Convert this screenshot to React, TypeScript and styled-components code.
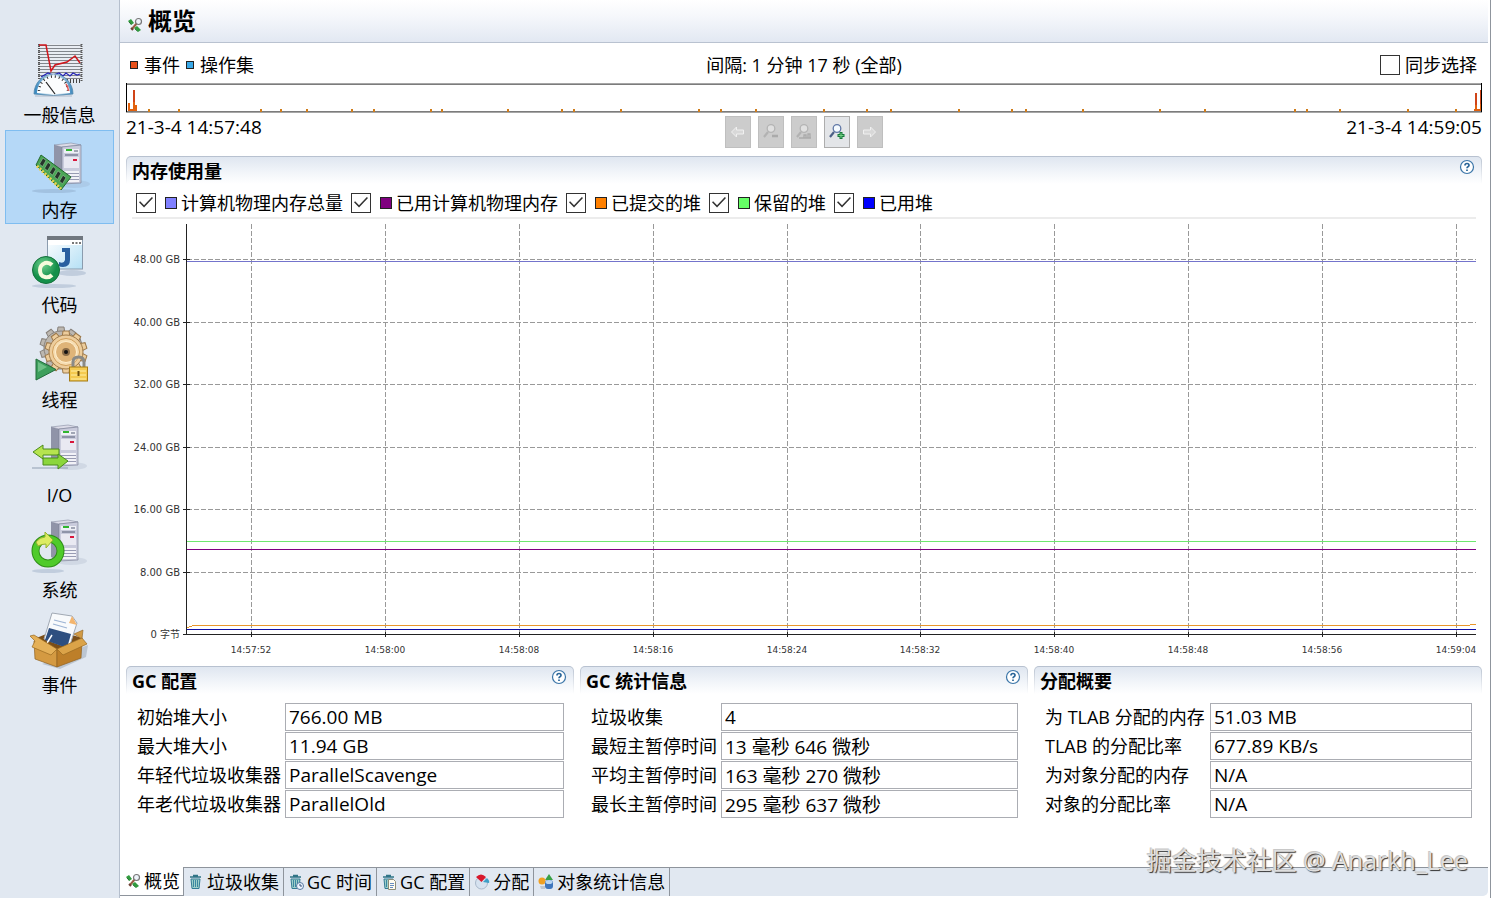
import React, { useState } from 'react';
import styled, { createGlobalStyle } from 'styled-components';

const GlobalStyle = createGlobalStyle`
    * {
        box-sizing: border-box;
    }

    body {
        margin: 0;
        background: #fff;
        color: #000;
        font-family: 'Open Sans', 'Noto Sans CJK SC', sans-serif;
        font-size: 18px;
        line-height: 26px;
    }

    button,
    input {
        font: inherit;
        color: inherit;
        padding: 0;
        margin: 0;
    }

    svg {
        display: block;
        flex: none;
    }
`;

// page frame
const Page = styled.div`
    display: flex;
    min-height: 100vh;
    position: relative;
    border-right: 1px solid #8f959d;
`;

const Sidebar = styled.nav`
    width: 120px;
    flex: none;
    padding: 35px 5px 0;
    background: #e1e8f1;
    border-right: 1px solid #b5bfcd;
    display: flex;
    flex-direction: column;
    gap: 1px;
`;

const NavItem = styled.button<{ $active: boolean }>`
    height: 94px;
    border: 1px solid ${(p) => (p.$active ? '#7fbdf0' : 'transparent')};
    background: ${(p) => (p.$active ? '#b5d8f7' : 'transparent')};
    display: flex;
    flex-direction: column;
    align-items: center;
    gap: 2px;
    cursor: pointer;
`;

const Main = styled.main`
    flex: 1;
    min-width: 0;
    display: flex;
    flex-direction: column;
    padding: 0 2px 2px 0;
`;

const PageHeader = styled.header`
    height: 43px;
    padding: 0 7px;
    display: flex;
    align-items: center;
    gap: 5px;
    background: linear-gradient(#fff, #f5f7fb 40%, #e2e8f2);
    border-bottom: 1px solid #b9c2d0;

    svg {
        margin-top: 8px;
    }
`;

const PageTitle = styled.h1`
    margin: 0;
    font-size: 24px;
    font-weight: 700;
    line-height: 40px;
`;

const Content = styled.div`
    padding: 0 6px;
`;

const ThreeColumns = styled.div`
    display: grid;
    grid-template-columns: 1fr auto 1fr;
    padding-top: 3px;
    align-items: center;
    height: 40px;
`;

const TimelineFooter = styled(ThreeColumns)`
    align-items: start;
    height: 43px;
`;

const Legend = styled.div`
    display: flex;
    align-items: center;
    gap: 6px;
    padding-left: 4px;
`;

const Dot = styled.span<{ $color: string }>`
    width: 8px;
    height: 8px;
    border: 1px solid #222;
    background: ${(p) => p.$color};
`;

const RightLabel = styled.label`
    display: flex;
    justify-content: flex-end;
    align-items: center;
    gap: 5px;
    padding-right: 5px;
`;

const CheckBox = styled.input`
    appearance: none;
    width: 20px;
    height: 20px;
    flex: none;
    border: 1px solid #333;
    background: #fff;
    display: grid;
    place-content: center;

    &:checked::before {
        content: '';
        width: 14px;
        height: 12px;
        background: #333;
        clip-path: polygon(0 48%, 8% 40%, 36% 72%, 92% 4%, 100% 12%, 36% 92%);
    }
`;

const TimeText = styled.span<{ $right?: boolean }>`
    font-size: 19px;
    line-height: 22px;
    text-align: ${(p) => (p.$right ? 'right' : 'left')};
`;

const ToolBar = styled.div`
    display: flex;
    gap: 7px;
`;

const ToolButton = styled.button`
    width: 26px;
    height: 32px;
    border: 1px solid #adadad;
    background: #e3e5e8;
    display: flex;
    align-items: center;
    justify-content: center;

    &:disabled {
        background: #cccccc;
        border-color: #bfbfbf;
    }
`;

const SectionHeader = styled.div`
    height: 28px;
    padding: 0 6px 0 5px;
    display: flex;
    align-items: flex-start;
    justify-content: space-between;
    border: 1px solid transparent;
    border-bottom: 0;
    border-radius: 5px 5px 0 0;
    background:
        linear-gradient(#dfe6f0, #f3f6fa 60%, #fff) padding-box,
        linear-gradient(#b6c0cf, #fff) border-box;
`;

const SectionTitle = styled.h2`
    margin: 0;
    font-size: 18px;
    font-weight: 700;
    line-height: 28px;
`;

const HelpButton = styled.button`
    border: 0;
    background: none;
    margin-top: 2px;
`;

const SeriesRow = styled.div`
    display: flex;
    align-items: center;
    gap: 8px;
    height: 35px;
    margin: 0 6px;
    padding: 4px 4px 0;
    border-bottom: 2px solid #ececec;
`;

const SeriesLabel = styled.label`
    display: flex;
    align-items: center;
`;

const Swatch = styled.span<{ $color: string }>`
    width: 12px;
    height: 12px;
    margin: 0 4px 0 9px;
    border: 1px solid #222;
    background: ${(p) => p.$color};
`;

const ChartBox = styled.div`
    padding: 0 6px;
    margin-bottom: 6px;
`;

const Panels = styled.div`
    display: grid;
    grid-template-columns: repeat(3, minmax(0, 1fr));
    gap: 6px;
`;

const Fields = styled.div<{ $labelWidth: number }>`
    display: grid;
    grid-template-columns: ${(p) => p.$labelWidth}px 1fr;
    column-gap: 4px;
    row-gap: 1px;
    padding: 9px 10px 0 11px;
    align-items: center;
    white-space: nowrap;
`;

const ValueBox = styled.input`
    width: 100%;
    height: 28px;
    border: 1px solid #abadb3;
    background: #fff;
    padding: 0 3px;
    outline: 0;
    font-size: 19px;
`;

const TabBar = styled.div`
    display: flex;
    height: 29px;
    margin-top: auto;
    background: #e1e8f1;
    border-bottom-right-radius: 5px;
`;

const Tab = styled.button<{ $active: boolean }>`
    display: flex;
    align-items: center;
    gap: 3px;
    padding: ${(p) => (p.$active ? '0 3px 0 5px' : '0 4px')};
    border: 0 solid #8e949c;
    border-width: ${(p) => (p.$active ? '0 1px 1px 0' : '1px 1px 0 0')};
    background: ${(p) => (p.$active ? '#fff' : 'transparent')};
    white-space: nowrap;
`;

const TabFill = styled.div`
    flex: 1;
    border-top: 1px solid #8e949c;
`;

const Watermark = styled.div`
    position: absolute;
    right: 22px;
    bottom: 20px;
    font-size: 25px;
    line-height: 36px;
    color: #dedede;
    text-shadow: 1px 1px 1px #333, -1px -1px 0 #c8c8c8;
    pointer-events: none;
`;

// large sidebar icons
const Server = ({ x, y }: { x: number; y: number }) => (
    <g transform={`translate(${x} ${y})`}>
        <ellipse cx="20" cy="41" rx="16" ry="4" fill="#8a9bb5" opacity=".2" />
        <path d="M0 2 8 4v37l-8-4z" fill="#9094a8" />
        <path d="M0 2 17 0l10 2-19 2z" fill="#dcdce8" stroke="#777c92" strokeWidth=".5" />
        <path d="M8 4 27 2v38l-19 1z" fill="#c9cbdc" stroke="#777c92" strokeWidth=".6" />
        <path d="M10 6h15v4H10z" fill="#eef0f6" />
        <path d="M12 7h6" stroke="#2fb52f" strokeWidth="2" />
        <path d="M20 8h4M11 12h13" stroke="#555c75" />
        <path d="M10 14h15v11H10z" fill="#e9e9f2" />
        <path d="M19 17h4" stroke="#d8173c" strokeWidth="2" />
        <path d="M10 29h15M10 32h15M10 35h15M10 38h15" stroke="#fff" strokeWidth="1.4" />
        <path d="M10 30.500h15M10 33.500h15M10 36.500h15" stroke="#8286a0" strokeWidth=".7" />
    </g>
);

const gearTeeth = Array.from({ length: 10 }, (_, i) => i * 36);

const Gear = ({ x, y, fill, stroke }: { x: number; y: number; fill: string; stroke: string }) => (
    <g transform={`translate(${x} ${y})`} fill={fill} stroke={stroke} strokeWidth="1">
        {gearTeeth.map((a) => (
            <path key={a} d="m-4-14 1-7h6l1 7z" transform={`rotate(${a})`} />
        ))}
        <circle r="17" />
        <circle r="16" stroke="none" />
    </g>
);

const GeneralIcon = () => (
    <svg width="60" height="64" viewBox="0 0 60 64">
        <defs>
            <pattern id="stripes" width="3" height="3" patternUnits="userSpaceOnUse">
                <rect width="3" height="3" fill="#e9edf3" />
                <rect width="3" height="1" fill="#82868c" />
            </pattern>
            <linearGradient id="dial" x1="0" x2="1">
                <stop offset="0" stopColor="#2c82bd" />
                <stop offset=".5" stopColor="#eaf4fb" />
                <stop offset="1" stopColor="#3b87bd" />
            </linearGradient>
        </defs>
        <rect x="8" y="8" width="44" height="36" fill="url(#stripes)" />
        <path d="M9 8v36M51.500 8v38" stroke="#555" strokeWidth="2" strokeDasharray="1 1" />
        <path d="M37 45h14" stroke="#444" strokeWidth="4" strokeDasharray="1 2" />
        <path d="M9 9h7l5 26 4-6 12-3 8-6 5 7" fill="none" stroke="#d0161c" strokeWidth="1.500" />
        <path d="m11 41 7-4 5 2 6-2 4 3 3-3 4 3 3-3 4 2 3-1" fill="none" stroke="#2323b8" strokeWidth="1.200" />
        <path d="M4 58a19.500 20 0 0 1 39 0q-19.500 3-39 0z" fill="url(#dial)" stroke="#5689ac" strokeWidth=".8" />
        <path d="M7 57a16.500 17 0 0 1 33 0q-16 2-33 0z" fill="#fbfdfe" />
        <path d="M9 55a14.500 14.500 0 0 1 29 0" fill="none" stroke="#333" strokeWidth="2.500" strokeDasharray="1 3" />
        <path d="M36 48q2 3 2.500 7" fill="none" stroke="#d55" strokeWidth="1.500" />
        <path d="m16 46 9 12" stroke="#222" strokeWidth="1.200" />
        <path d="M5 60h37" stroke="#8290a4" opacity=".5" />
    </svg>
);

const MemoryIcon = () => (
    <svg width="60" height="64" viewBox="0 0 60 64">
        <ellipse cx="24" cy="60" rx="22" ry="2" fill="#7890b0" opacity=".3" />
        <Server x={24} y={12} />
        <path d="M11 24 41 46 31 59 6 34z" fill="#4aa656" stroke="#24692e" />
        <path d="m7 35 24 23" stroke="#e8d24e" strokeWidth="3" strokeDasharray="2 1.500" />
        <g fill="#26352b" stroke="#a4d5a6" strokeWidth=".5">
            {[0, 1, 2, 3, 4].map((i) => (
                <path key={i} d="m13 27 3 2.500-3.500 6-3-2.500z" transform={`translate(${i * 5} ${i * 4.3})`} />
            ))}
        </g>
    </svg>
);

const CodeIcon = () => (
    <svg width="60" height="64" viewBox="0 0 60 64">
        <defs>
            <linearGradient id="win" x2="1" y2="1">
                <stop offset="0" stopColor="#fff" />
                <stop offset="1" stopColor="#b5e0f5" />
            </linearGradient>
            <radialGradient id="green" cx=".4" cy=".3">
                <stop offset="0" stopColor="#6fd08d" />
                <stop offset="1" stopColor="#14904a" />
            </radialGradient>
        </defs>
        <ellipse cx="24" cy="60" rx="22" ry="2" fill="#7890b0" opacity=".3" />
        <ellipse cx="42" cy="47" rx="14" ry="3" fill="#7890b0" opacity=".3" />
        <rect x="17.500" y="11" width="35" height="32" fill="url(#win)" stroke="#8b9cae" />
        <rect x="17" y="10" width="36" height="4" fill="#70777f" />
        <path d="M18 14h34v5H18z" fill="#fff" />
        <path d="M42 17h9" stroke="#777" strokeWidth="2" strokeDasharray="2 1.500" />
        <path d="M32 22h8v12q0 7-7 7-3 0-4-1v-4q5 2 6-2v-8h-3z" fill="#285f9f" />
        <circle cx="16" cy="44" r="13.500" fill="url(#green)" stroke="#12703a" />
        <path d="M22 39q-3-3-7-2-5 2-5 7 0 6 5 7 4 1 7-2" fill="none" stroke="#f7fbdc" strokeWidth="4" />
    </svg>
);

const ThreadIcon = () => (
    <svg width="60" height="64" viewBox="0 0 60 64">
        <Gear x={31} y={27} fill="#bcb7b0" stroke="#87817b" />
        <Gear x={36} y={31} fill="#edcd9c" stroke="#9d7849" />
        <circle cx="36" cy="31" r="13.500" fill="#f6ddb2" stroke="#d19e5a" />
        <circle cx="36" cy="31" r="10.500" fill="#dfb478" stroke="#fff0cf" />
        <circle cx="36" cy="31" r="4" fill="#8b6c47" />
        <circle cx="36" cy="31" r="2" fill="#111" />
        <path d="M6 38 26 48.500 6 59z" fill="#3d9f5c" stroke="#226c3b" />
        <path d="m8 41 9 5-9 5z" fill="#8fd7a2" opacity=".6" />
        <path d="M43 46v-5q0-5 5.500-5t5.500 5v5" fill="none" stroke="#8a8a86" strokeWidth="3" />
        <rect x="39.500" y="46" width="18" height="14" fill="#f4ca50" stroke="#a67c16" />
        <path d="M41 50h15M41 54h15M41 58h15" stroke="#fff0a6" />
        <path d="M48.500 50v5" stroke="#6b4c0a" strokeWidth="2" />
    </svg>
);

const IoIcon = () => (
    <svg width="60" height="64" viewBox="0 0 60 64">
        <path d="M2 52h36" stroke="#6f7f98" strokeWidth="2" opacity=".35" />
        <Server x={21} y={9} />
        <g stroke="#4a8c1c">
            <path d="m3 36 10-7v4h16v6H13v4z" fill="#b6e44f" />
            <path d="m38 45-10-7v4H13v7h15v4z" fill="#8bd63c" />
        </g>
    </svg>
);

const SystemIcon = () => (
    <svg width="60" height="64" viewBox="0 0 60 64">
        <ellipse cx="18" cy="60" rx="16" ry="2" fill="#7890b0" opacity=".3" />
        <Server x={21} y={9} />
        <circle cx="18" cy="40" r="12.500" fill="none" stroke="#2f8d18" strokeWidth="8" />
        <circle cx="18" cy="40" r="12.500" fill="none" stroke="#4fcb2a" strokeWidth="6" />
        <path d="M6 31q4-5 9-5v-5l8 8-7 8v-4q-4 0-8 2z" fill="#dcec62" stroke="#93b32e" />
    </svg>
);

const EventIcon = () => (
    <svg width="60" height="64" viewBox="0 0 60 64">
        <path d="m12 58 18 5 26-12 2-12z" fill="#68768c" opacity=".3" />
        <path d="m4 33 22-9 26 8-25 12z" fill="#7b4e17" />
        <path d="m44 28 9-4-1 9z" fill="#d19a45" stroke="#8f611e" strokeWidth=".6" />
        <path d="m22 7 20 3 5 7-8 25-25-9z" fill="#f8fafc" stroke="#a1a9b4" />
        <path d="m42 10-3 7 8 2z" fill="#f4b56e" />
        <path d="m24 14 12 3M23 18l14 4" stroke="#9db4d4" strokeWidth="1.200" />
        <path d="m19 22 22 6-4 14-22-8z" fill="#2e4f80" />
        <path d="m22 29-5 8" stroke="#fff" strokeWidth="1.500" />
        <path d="m4 35 23 9v17L5 53z" fill="#d49a42" stroke="#916120" strokeWidth=".7" />
        <path d="m27 44 25-9-1 17-24 9z" fill="#bd7f29" stroke="#916120" strokeWidth=".7" />
        <path d="m0 30 4-1 23 14-6 6L2 41l3-6z" fill="#e4b058" stroke="#98681f" strokeWidth=".7" />
        <path d="m27 43 25-11 5 6-24 11z" fill="#dba348" stroke="#98681f" strokeWidth=".7" />
    </svg>
);

// 16px icons
const OverviewIcon = () => (
    <svg width="16" height="16" viewBox="0 0 16 16">
        <path d="m5 12 5-6" stroke="#9a5d45" strokeWidth="2" />
        <circle cx="11.500" cy="4.500" r="3" fill="#eef3fa" stroke="#777" strokeWidth="1.200" />
        <path d="m1 4 3-2 3 4-3 2zM7 11l3-2 4 4-3 2z" fill="#319b3f" />
        <path d="m2 5 3 3M8 12l3 3" stroke="#1d5c28" strokeDasharray="1 1" />
        <path d="m4 11 2 2" stroke="#6e4033" strokeWidth="2" />
    </svg>
);

const TrashBody = () => (
    <>
        <path d="M2 3h11M5 1.500h5" stroke="#2f7487" strokeWidth="1.600" />
        <path d="M3 5h9l-1 9.500H4z" fill="#9fd0c9" stroke="#317b94" />
        <path d="M5.500 6v7M7.500 6v7M9.500 6v7" stroke="#3b87a2" />
    </>
);

const TrashIcon = () => (
    <svg width="16" height="16" viewBox="0 0 16 16">
        <TrashBody />
    </svg>
);

const TrashClockIcon = () => (
    <svg width="16" height="16" viewBox="0 0 16 16">
        <TrashBody />
        <circle cx="12" cy="12" r="3.500" fill="#eef5ff" stroke="#55779f" />
        <path d="M12 10v2h2" fill="none" stroke="#334f78" />
    </svg>
);

const TrashPageIcon = () => (
    <svg width="16" height="16" viewBox="0 0 16 16">
        <TrashBody />
        <path d="M7.500 5.500h5l2 2v8h-7z" fill="#fffdf0" stroke="#8c8c78" />
        <path d="M9 9.500h4M9 11.500h4M9 13.500h3" stroke="#668dc0" />
    </svg>
);

const PieIcon = () => (
    <svg width="16" height="16" viewBox="0 0 16 16">
        <circle cx="7.500" cy="9" r="6" fill="#d6e2f0" stroke="#a9b8cb" />
        <path d="M7.500 8 2 3q5-5 10 0z" fill="#d8182c" />
        <path d="m9 8 4-4q3 3 2 5z" fill="#3d9fc8" />
    </svg>
);

const ShapesIcon = () => (
    <svg width="16" height="16" viewBox="0 0 16 16">
        <path d="M11 0 15 6H7z" fill="#38a047" />
        <circle cx="4" cy="7" r="3.500" fill="#f0a022" />
        <rect x="7" y="6" width="8" height="9" rx="3" fill="#3f76bd" />
        <ellipse cx="11" cy="8" rx="3.500" ry="2" fill="#b9d6f2" />
        <path d="M2 12h5v3H3z" fill="#c0c7d0" />
    </svg>
);

const HelpIcon = () => (
    <svg width="16" height="16" viewBox="0 0 16 16">
        <circle cx="8" cy="8" r="6.500" fill="#fff" stroke="#3a75a8" strokeWidth="1.200" />
        <path
            d="M6 6.500q0-2 2-2t2 1.700q0 1-1 1.600-1 .6-1 1.400M8 10.500v1.500"
            fill="none"
            stroke="#2a6598"
            strokeWidth="1.700"
        />
    </svg>
);

const ArrowIcon = ({ flip }: { flip?: boolean }) => (
    <svg width="16" height="16" viewBox="0 0 16 16">
        <path
            d="m1.500 8 5-5v3h7v4h-7v3z"
            fill="#d8d8d8"
            stroke="#f0f0f0"
            transform={flip ? 'translate(15 0) scale(-1 1)' : undefined}
        />
    </svg>
);

const ZoomIcon = ({ kind }: { kind: 'out' | 'select' | 'in' }) => {
    const on = kind === 'in';
    return (
        <svg width="16" height="16" viewBox="0 0 16 16">
            <path d="m5 8-4 5" stroke={on ? '#4b5f86' : '#b2b2b2'} strokeWidth="2.200" />
            <circle
                cx="8"
                cy="4.500"
                r="3.800"
                fill={on ? '#f4faff' : '#e0e0e0'}
                stroke={on ? '#6078a6' : '#b4b4b4'}
                strokeWidth="1.300"
            />
            {kind === 'in' && <path d="M12 8v7M8.500 11.500h7" stroke="#187a3c" strokeWidth="3" />}
            {kind === 'in' && <path d="M12 9v5M9.500 11.500h5" stroke="#74cf83" />}
            {kind === 'out' && <path d="M9 12h6" stroke="#aaa" strokeWidth="2.500" />}
            {kind === 'select' && (
                <path d="M3 14h12M8 14v-3h2v3M12 14v-4h2v4" fill="none" stroke="#aaa" strokeWidth="1.300" />
            )}
        </svg>
    );
};

const ticks = [
    23, 53, 135, 155, 181, 226, 248, 305, 316, 382, 436, 448, 495, 573, 595, 630, 698, 741, 765, 833, 886, 900, 957,
    1034, 1079, 1169, 1181, 1214, 1282, 1330,
];

const Timeline = () => (
    <svg width="100%" height="30" viewBox="0 0 1356 30" preserveAspectRatio="none" shapeRendering="crispEdges">
        <rect width="1356" height="1" fill="#a6a6a6" />
        <rect y="1" width="1356" height="1" fill="#7c7c7c" />
        <rect y="28" width="1356" height="1" fill="#7c7c7c" />
        <rect y="29" width="1356" height="1" fill="#a6a6a6" />
        <rect width="1" height="29" fill="#000" />
        <rect x="1355" width="1" height="29" fill="#000" />
        {ticks.map((t) => (
            <rect key={t} x={t - 1} y="26" width="2" height="3" fill="#cf7c1b" />
        ))}
        <path d="M2 20h2v6h3V7h2v15h2v6H2z" fill="#e2620f" />
        <path d="M7 7h2v12H7z" fill="#d04418" />
        <path d="M1348 26h1V10h2v16h3V7h1v21h-7z" fill="#e2620f" />
        <path d="M1349 10h2v12h-2zM1354 7h1v14h-1z" fill="#d04418" />
    </svg>
);

const xLabels = [
    { x: 119, text: '14:57:52' },
    { x: 253, text: '14:58:00' },
    { x: 387, text: '14:58:08' },
    { x: 521, text: '14:58:16' },
    { x: 655, text: '14:58:24' },
    { x: 788, text: '14:58:32' },
    { x: 922, text: '14:58:40' },
    { x: 1056, text: '14:58:48' },
    { x: 1190, text: '14:58:56' },
    { x: 1324, text: '14:59:04' },
];

const yLabels = [
    { y: 40, text: '48.00 GB' },
    { y: 103, text: '40.00 GB' },
    { y: 165, text: '32.00 GB' },
    { y: 228, text: '24.00 GB' },
    { y: 290, text: '16.00 GB' },
    { y: 353, text: '8.00 GB' },
    { y: 415, text: '0 字节' },
];

const AxisText = styled.text<{ $size: number }>`
    font-family: 'DejaVu Sans', 'Noto Sans CJK SC', sans-serif;
    font-size: ${(p) => p.$size}px;
    fill: #333;
`;

const Chart = () => (
    <svg width="100%" viewBox="0 0 1344 441">
        <g shapeRendering="crispEdges">
            <g fill="none" stroke="#999" strokeDasharray="5 2">
                {xLabels.map((l) => (
                    <path key={l.text} d={`M${l.x + 0.5} 5V415`} />
                ))}
                {yLabels.slice(0, 6).map((l) => (
                    <path key={l.text} d={`M55 ${l.y + 0.5}H1344`} />
                ))}
            </g>
            <rect x="55" y="42" width="1289" height="1" fill="#7474cc" />
            <rect x="55" y="322" width="1289" height="1" fill="#6ee86e" />
            <rect x="55" y="330" width="1289" height="1" fill="#800080" />
            <rect x="60" y="406" width="1278" height="1" fill="#e8962a" />
            <path d="M55 408h2v-1h3v1h-3v1h-2zM1338 405h6v1h-6z" fill="#e8962a" />
            <rect x="55" y="410" width="1289" height="1" fill="#1010a8" />
            <path d="M54.500 5V416M54 415.500H1344" fill="none" stroke="#222" />
            <g fill="none" stroke="#222">
                {xLabels.map((l) => (
                    <path key={l.text} d={`M${l.x + 0.5} 413v5`} />
                ))}
                {yLabels.map((l) => (
                    <path key={l.text} d={`M51 ${l.y + 0.5}h7`} />
                ))}
            </g>
        </g>
        {yLabels.map((l) => (
            <AxisText key={l.text} $size={10} x="48" y={l.y + 4} textAnchor="end">
                {l.text}
            </AxisText>
        ))}
        {xLabels.map((l) => (
            <AxisText key={l.text} $size={9} x={l.x} y="434" textAnchor="middle">
                {l.text}
            </AxisText>
        ))}
    </svg>
);

const navItems = [
    { name: '一般信息', Icon: GeneralIcon },
    { name: '内存', Icon: MemoryIcon },
    { name: '代码', Icon: CodeIcon },
    { name: '线程', Icon: ThreadIcon },
    { name: 'I/O', Icon: IoIcon },
    { name: '系统', Icon: SystemIcon },
    { name: '事件', Icon: EventIcon },
];

const series = [
    { name: '计算机物理内存总量', color: '#8080ff' },
    { name: '已用计算机物理内存', color: '#800080' },
    { name: '已提交的堆', color: '#ff8000' },
    { name: '保留的堆', color: '#66ff66' },
    { name: '已用堆', color: '#0000ff' },
];

const panels = [
    {
        title: 'GC 配置',
        help: true,
        labelWidth: 144,
        rows: [
            ['初始堆大小', '766.00 MB'],
            ['最大堆大小', '11.94 GB'],
            ['年轻代垃圾收集器', 'ParallelScavenge'],
            ['年老代垃圾收集器', 'ParallelOld'],
        ],
    },
    {
        title: 'GC 统计信息',
        help: true,
        labelWidth: 126,
        rows: [
            ['垃圾收集', '4'],
            ['最短主暂停时间', '13 毫秒 646 微秒'],
            ['平均主暂停时间', '163 毫秒 270 微秒'],
            ['最长主暂停时间', '295 毫秒 637 微秒'],
        ],
    },
    {
        title: '分配概要',
        help: false,
        labelWidth: 161,
        rows: [
            ['为 TLAB 分配的内存', '51.03 MB'],
            ['TLAB 的分配比率', '677.89 KB/s'],
            ['为对象分配的内存', 'N/A'],
            ['对象的分配比率', 'N/A'],
        ],
    },
];

const tabs = [
    { name: '概览', Icon: OverviewIcon },
    { name: '垃圾收集', Icon: TrashIcon },
    { name: 'GC 时间', Icon: TrashClockIcon },
    { name: 'GC 配置', Icon: TrashPageIcon },
    { name: '分配', Icon: PieIcon },
    { name: '对象统计信息', Icon: ShapesIcon },
];

const App: React.FC = () => {
    const [nav, setNav] = useState('内存');
    const [tab, setTab] = useState('概览');

    return (
        <Page>
            <GlobalStyle />
            <Sidebar>
                {navItems.map(({ name, Icon }) => (
                    <NavItem key={name} $active={name === nav} onClick={() => setNav(name)}>
                        <Icon />
                        <span>{name}</span>
                    </NavItem>
                ))}
            </Sidebar>
            <Main>
                <PageHeader>
                    <OverviewIcon />
                    <PageTitle>概览</PageTitle>
                </PageHeader>
                <Content>
                    <ThreeColumns>
                        <Legend>
                            <Dot $color="#e8501a" />
                            <span>事件</span>
                            <Dot $color="#38a8e8" />
                            <span>操作集</span>
                        </Legend>
                        <span>间隔: 1 分钟 17 秒 (全部)</span>
                        <RightLabel>
                            <CheckBox type="checkbox" />
                            同步选择
                        </RightLabel>
                    </ThreeColumns>
                    <Timeline />
                    <TimelineFooter>
                        <TimeText>21-3-4 14:57:48</TimeText>
                        <ToolBar>
                            <ToolButton disabled aria-label="后退">
                                <ArrowIcon />
                            </ToolButton>
                            <ToolButton disabled aria-label="缩小">
                                <ZoomIcon kind="out" />
                            </ToolButton>
                            <ToolButton disabled aria-label="缩放到选区">
                                <ZoomIcon kind="select" />
                            </ToolButton>
                            <ToolButton aria-label="放大">
                                <ZoomIcon kind="in" />
                            </ToolButton>
                            <ToolButton disabled aria-label="前进">
                                <ArrowIcon flip />
                            </ToolButton>
                        </ToolBar>
                        <TimeText $right>21-3-4 14:59:05</TimeText>
                    </TimelineFooter>

                    {/* 内存图表 */}
                    <SectionHeader>
                        <SectionTitle>内存使用量</SectionTitle>
                        <HelpButton aria-label="帮助">
                            <HelpIcon />
                        </HelpButton>
                    </SectionHeader>
                    <SeriesRow>
                        {series.map((s) => (
                            <SeriesLabel key={s.name}>
                                <CheckBox type="checkbox" defaultChecked />
                                <Swatch $color={s.color} />
                                {s.name}
                            </SeriesLabel>
                        ))}
                    </SeriesRow>
                    <ChartBox>
                        <Chart />
                    </ChartBox>

                    <Panels>
                        {panels.map((panel) => (
                            <section key={panel.title}>
                                <SectionHeader>
                                    <SectionTitle>{panel.title}</SectionTitle>
                                    {panel.help && (
                                        <HelpButton aria-label="帮助">
                                            <HelpIcon />
                                        </HelpButton>
                                    )}
                                </SectionHeader>
                                <Fields $labelWidth={panel.labelWidth}>
                                    {panel.rows.map(([label, value]) => (
                                        <React.Fragment key={label}>
                                            <label htmlFor={label}>{label}</label>
                                            <ValueBox id={label} readOnly value={value} />
                                        </React.Fragment>
                                    ))}
                                </Fields>
                            </section>
                        ))}
                    </Panels>
                </Content>
                <TabBar>
                    {tabs.map(({ name, Icon }) => (
                        <Tab key={name} $active={name === tab} onClick={() => setTab(name)}>
                            <Icon />
                            {name}
                        </Tab>
                    ))}
                    <TabFill />
                </TabBar>
            </Main>
            <Watermark>掘金技术社区 @ Anarkh_Lee</Watermark>
        </Page>
    );
};

export default App;
